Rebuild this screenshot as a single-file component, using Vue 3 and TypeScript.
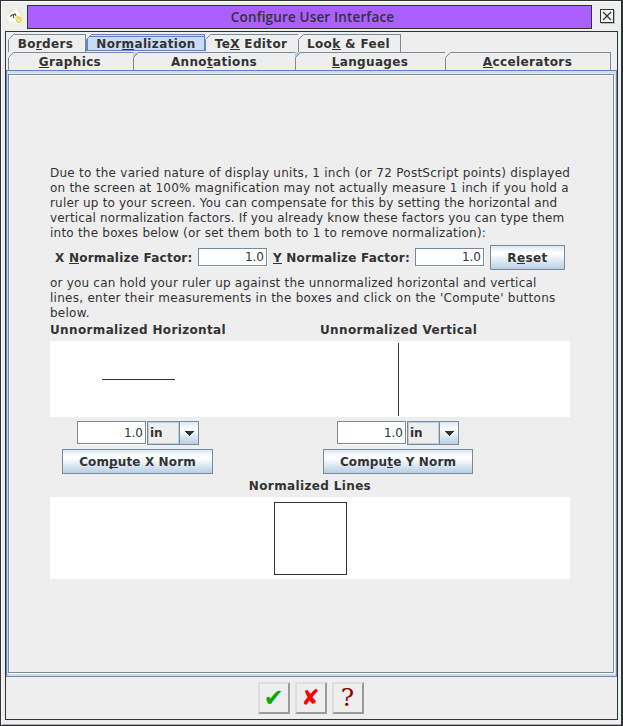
<script setup lang="ts">
interface Tab { pre: string; key: string; post: string; w: number; active?: boolean; first?: boolean }
interface Line { text: string; ls: number }
const topTabs: Tab[] = [
  { pre: 'Bo', key: 'r', post: 'ders', w: 78, first: true },
  { pre: 'Nor', key: 'm', post: 'alization', w: 120, active: true },
  { pre: 'Te', key: 'X', post: ' Editor', w: 93 },
  { pre: 'Loo', key: 'k', post: ' & Feel', w: 102 },
]
const bottomTabs: Tab[] = [
  { pre: '', key: 'G', post: 'raphics', w: 126, first: true },
  { pre: 'Anno', key: 't', post: 'ations', w: 162 },
  { pre: '', key: 'L', post: 'anguages', w: 150 },
  { pre: '', key: 'A', post: 'ccelerators', w: 165 },
]
const intro: Line[] = [
  { text: 'Due to the varied nature of display units, 1 inch (or 72 PostScript points) displayed', ls: 0.262 },
  { text: 'on the screen at 100% magnification may not actually measure 1 inch if you hold a', ls: 0.215 },
  { text: 'ruler up to your screen. You can compensate for this by setting the horizontal and', ls: 0.18 },
  { text: 'vertical normalization factors. If you already know these factors you can type them', ls: 0.165 },
  { text: 'into the boxes below (or set them both to 1 to remove normalization):', ls: 0.22 },
]
const ruler: Line[] = [
  { text: 'or you can hold your ruler up against the unnormalized horizontal and vertical', ls: 0.2 },
  { text: "lines, enter their measurements in the boxes and click on the 'Compute' buttons", ls: 0.27 },
  { text: 'below.', ls: 0.25 },
]
const axes = [
  { pre: 'Com', key: 'p', post: 'ute X Norm', cls: 'ax-x' },
  { pre: 'Compu', key: 't', post: 'e Y Norm', cls: 'ax-y' },
]
</script>

<template>
  <div class="window">
    <header class="titlebar">
      <svg class="logo" width="16" height="16" viewBox="0 0 16 16">
        <path d="M2 5 4 2 8 0 12 1 14 4 14 9 15 11 12 15H2L1 12 0 8Z" fill="#fff" />
        <path d="M1 6V4H3V2H5V1H8M10 1H12V3H14V7" fill="none" stroke="#f3e0a8" stroke-width="1.2" />
        <path d="M8 9 10 7 14 8 15 11 13 14 10 14Z" fill="#f0cd62" />
        <path d="M9 9l3 3M13 10l-2 3" stroke="#fff6d8" />
        <path d="M3 7.500 5 6 8 5 9 7M6.500 6v3" fill="none" stroke="#4c4c4c" stroke-width="1.200" />
        <path d="M1 9v5h8" fill="none" stroke="#f5e4b0" />
      </svg>
      <div class="title"><span>Configure User Interface</span></div>
      <div class="close">
        <svg width="12" height="12" viewBox="0 0 12 12"><path d="M2 2l8 8M10 2l-8 8" stroke="#2e3436" stroke-width="1.2" /></svg>
      </div>
    </header>

    <main class="content">
      <nav class="tabs">
        <div class="tabrow">
          <div v-for="t in topTabs" :key="t.key" class="tab" :class="{ active: t.active, first: t.first }" :style="{ width: t.w + 'px' }">
            <svg class="corner" width="7" height="7"><path d="M0 0H6L0 6Z" fill="#eee" /><path d="M.5 5.5 5.5 .5" :stroke="t.active ? '#6382bf' : '#7a8a99'" /></svg>
            <span>{{ t.pre }}<u>{{ t.key }}</u>{{ t.post }}</span>
          </div>
        </div>
        <div class="tabrow second">
          <div v-for="(t, i) in bottomTabs" :key="t.key" class="tab" :class="{ first: t.first }" :style="{ width: t.w + 'px' }">
            <svg class="corner" width="7" height="7"><path d="M0 0H6L0 6Z" :fill="i === 1 || i === 2 ? '#b8cfe5' : '#eee'" /><path d="M.5 5.5 5.5 .5" stroke="#7a8a99" /></svg>
            <span>{{ t.pre }}<u>{{ t.key }}</u>{{ t.post }}</span>
          </div>
        </div>
      </nav>

      <section class="pane">
        <div class="inner">
          <div class="prose"><p v-for="l in intro" :key="l.text" :style="{ letterSpacing: l.ls + 'px' }">{{ l.text }}</p></div>
          <div class="factors">
            <label class="fx">X <u>N</u>ormalize Factor:</label>
            <div class="field">1.0</div>
            <label class="fy"><u>Y</u> Normalize Factor:</label>
            <div class="field">1.0</div>
            <div class="btn reset"><span>R<u>e</u>set</span></div>
          </div>
          <div class="prose"><p v-for="l in ruler" :key="l.text" :style="{ letterSpacing: l.ls + 'px' }">{{ l.text }}</p></div>
          <div class="heads"><b>Unnormalized Horizontal</b><b>Unnormalized Vertical</b></div>
          <svg class="canvas" width="520" height="76">
            <path d="M52 38.5H125M348.5 2V75" stroke="#333" />
          </svg>
          <div class="axes">
            <div v-for="a in axes" :key="a.cls" class="axis" :class="a.cls">
              <div class="measure">
                <div class="field">1.0</div>
                <div class="combo">
                  <div class="unit">in</div>
                  <div class="arrow"><svg width="10" height="5" shape-rendering="crispEdges"><path d="M0 0H10L5 5Z" fill="#333" /></svg></div>
                </div>
              </div>
              <div class="btn"><span>{{ a.pre }}<u>{{ a.key }}</u>{{ a.post }}</span></div>
            </div>
          </div>
          <div class="linehead">Normalized Lines</div>
          <svg class="canvas" width="520" height="82"><rect x="224.5" y="5.5" width="72" height="72" fill="none" stroke="#333" /></svg>
        </div>
      </section>

      <footer class="actions">
        <div class="act ok">✔</div>
        <div class="act cancel">✘</div>
        <div class="act question">?</div>
      </footer>
    </main>
  </div>
</template>

<style>
body { background: #eee; overflow: hidden; }
</style>

<style scoped>
* { box-sizing: border-box; }
.window {
  width: 623px; height: 726px; background: #eee; color: #333;
  border: 1px solid #2e3436; border-right-width: 2px;
  box-shadow: inset 1px 1px #fff, inset 0 -1px #aaa;
  padding: 4px 3px 5px 4px;
  font: bold 12px/15px "DejaVu Sans", sans-serif;
  display: flex; flex-direction: column;
}
.titlebar { display: flex; height: 24px; margin-bottom: 2px; }
.logo { margin: 4px 4px 0 2px; flex: none; }
.title {
  width: 565px; height: 24px; border: 1px solid #2e3436; background: #ac5fff;
  display: flex; align-items: center; justify-content: center; padding-left: 6px;
  font: 600 13.5px/22px "Open Sans", "Noto Sans", sans-serif; letter-spacing: .15px;
}
.close {
  width: 14px; height: 14px; border: 1px solid #2e3436; margin: 4px 0 0 8px;
  box-shadow: 1px 1px #bbb; background: #f4f4f4;
}
.close svg { display: block; }
.content { width: 613px; height: 689px; border: 1px solid #2e3436; padding-top: 2px; }
.tabs { padding-left: 2px; }
.tabrow { display: flex; height: 18px; }
.tab {
  position: relative; height: 18px; display: flex; justify-content: center;
  border-top: 1px solid #7a8a99; border-right: 1px solid #7a8a99;
  line-height: 17px; white-space: pre; letter-spacing: .36px; padding: 1px 2px 0 0;
}
.second .tab { padding-right: 1px; }
.tab.first::before { content: ""; position: absolute; left: 0; top: 5px; bottom: 0; width: 1px; background: #7a8a99; }
.corner { position: absolute; left: -1px; top: -1px; }
.first .corner { left: 0; }
.tab.active {
  background: #c8ddf2; height: 17px; border: 1px solid #6382bf; border-left: 2px solid #6382bf; border-right-width: 2px;
  box-shadow: inset 0 1px #c8ddf2, inset 0 2px #6382bf; padding-right: 0;
}
.tab.active .corner { left: -2px; }
u { text-decoration: none; border-bottom: 1px solid #333; display: inline-block; height: 13px; line-height: 15px; }
.pane {
  width: 611px; height: 607px; border: 1px solid #6382bf; border-bottom-color: #7a8a99; border-right-color: #7a8a99;
  box-shadow: inset 0 0 0 2px #c8ddf2; padding: 3px 2px 3px 1px;
}
.inner {
  height: 599px; border: 1px solid #7a8a99; padding: 91px 0 0 41px;
  box-shadow: inset 1px 1px #fff, 1px 1px #fff;
}
.prose { font-weight: normal; }
.prose p { margin: 0; white-space: nowrap; }
.factors { display: flex; align-items: center; height: 25px; margin: 4px 0 6px; white-space: pre; }
.fx { margin-left: 5px; width: 143px; }
.fy { margin-left: 6px; width: 142px; }
.fx, .fy { letter-spacing: .23px; padding-top: 2px; }
.field {
  width: 69px; height: 18px; background: #fff; border: 1px solid #7a8a99; box-shadow: 1px 1px #fff;
  text-align: right; padding-right: 2px; font-weight: normal; line-height: 17px;
}
.factors .field { margin-bottom: 1px; }
.btn {
  height: 25px; border: 1px solid #7a8a99; display: flex; justify-content: center; line-height: 24px;
  background: linear-gradient(#dde8f3 0, #fff 30%, #fff 35%, #b8cfe5 100%); white-space: pre; letter-spacing: .13px;
}
.reset { width: 75px; margin-left: 6px; letter-spacing: .4px; }
.heads { display: flex; height: 20px; padding-top: 2px; letter-spacing: .36px; }
.heads b { width: 270px; }
.canvas { display: block; background: #fff; }
.axes { display: flex; height: 61px; padding-top: 4px; }
.axis { width: 261px; }
.measure { display: flex; padding-left: 27px; }
.ax-y .measure { padding-left: 26px; }
.measure .field { height: 23px; line-height: 22px; margin-right: 1px; }
.combo { display: flex; width: 52px; height: 24px; border: 1px solid #7a8a99; }
.unit { width: 31px; border: 1px solid #b8cfe5; padding-left: 1px; line-height: 20px; }
.arrow { width: 19px; border-left: 1px solid #7a8a99; padding: 1px 0 0 0; display: flex; align-items: center; background: linear-gradient(#dde8f3 0, #fff 33%, #b8cfe5 100%); }
.arrow svg { margin-left: 4px; }
.axis > .btn { width: 151px; height: 25px; margin: 4px 0 0 12px; }
.ax-y > .btn { width: 150px; }
.linehead { text-align: center; height: 19px; line-height: 16px; width: 520px; letter-spacing: .36px; }
.actions { display: flex; justify-content: center; gap: 5px; padding: 5px 2px 0 0; }
.act {
  width: 32px; height: 32px; border: 2px solid; border-color: #ddd #9a9a9a #9a9a9a #ddd;
  display: flex; align-items: center; justify-content: center;
}
.ok { font: normal 24px/28px "DejaVu Sans", sans-serif; color: #00ad00; }
.cancel { font: normal 22px/28px "DejaVu Sans", sans-serif; color: #f00; }
.question { font: normal 25px/28px "DejaVu Serif", serif; color: #8b0000; }
</style>
